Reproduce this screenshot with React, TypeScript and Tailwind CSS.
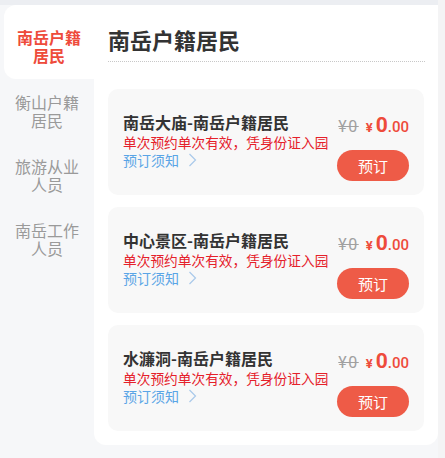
import React from "react";

const items = [
  { name: "南岳大庙-南岳户籍居民" },
  { name: "中心景区-南岳户籍居民" },
  { name: "水濂洞-南岳户籍居民" },
];

function Chevron() {
  return (
    <svg width="9" height="14" viewBox="0 0 9 14" className="ml-[9px]">
      <polyline points="1.5,1 7.5,7 1.5,13" fill="none" stroke="#a9c9ea" strokeWidth="1.2" />
    </svg>
  );
}

function Card({ name }: { name: string }) {
  return (
    <div className="h-[106px] w-[316px] rounded-[10px] bg-[#f8f8f8] flex justify-between">
      <div className="pl-[15px] pt-[22px] flex flex-col">
        <div className="text-[16px] leading-[22px] font-bold text-[#333333]">{name}</div>
        <div className="text-[13.7px] leading-[18px] text-[#e5202a] whitespace-nowrap">单次预约单次有效，凭身份证入园</div>
        <div className="flex items-center text-[14px] leading-[18px] text-[#5aa5e6]">
          预订须知
          <Chevron />
        </div>
      </div>
      <div className="pr-[15px] pt-[26px] flex flex-col items-end">
        <div className="flex items-baseline h-[24px] font-['Roboto','Noto_Sans_CJK_SC',sans-serif]">
          <span className="text-[16px] tracking-[1.5px] text-[#a0a0a0] line-through mr-[7px]">¥0</span>
          <span className="text-[13px] font-bold text-[#ee4b3b] mr-[3px]">¥</span>
          <span className="text-[21px] font-bold text-[#ee4b3b] leading-none">0</span>
          <span className="text-[15px] font-medium text-[#ee4b3b]">.00</span>
        </div>
        <button className="mt-[11px] w-[72px] h-[31px] rounded-full bg-[#ee5b47] text-white text-[15px] leading-[31px] text-center">
          预订
        </button>
      </div>
    </div>
  );
}

export default function App() {
  return (
    <div className="w-[445px] h-[458px] bg-[#f4f4f5] flex font-['Noto_Sans_CJK_SC','Noto_Sans',sans-serif]">
      <div className="w-[438px] h-[458px] bg-[#f6f7f9] flex flex-col">
        <div className="h-[5px] bg-[#eceef2]" />
        <div className="flex">
          <div className="w-[94px] flex flex-col">
            <div className="ml-[4px] h-[74px] bg-white rounded-l-[12px] pt-[23px] text-center text-[16px] leading-[18px] font-bold text-[#ee4b3b]">
              南岳户籍
              <br />
              居民
            </div>
            <div className="py-[14px] text-center text-[16px] leading-[18px] text-[#9a9a9a]">
              衡山户籍
              <br />
              居民
            </div>
            <div className="py-[14px] text-center text-[16px] leading-[18px] text-[#9a9a9a]">
              旅游从业
              <br />
              人员
            </div>
            <div className="py-[14px] text-center text-[16px] leading-[18px] text-[#9a9a9a]">
              南岳工作
              <br />
              人员
            </div>
          </div>
          <div className="w-[344px] h-[440px] bg-white rounded-b-[12px] px-[14px] pt-[19px]">
            <div className="w-[317px] pb-[7px] border-b border-dotted border-[#c8c8c8] text-[22px] leading-[30px] font-bold text-[#333333]">
              南岳户籍居民
            </div>
            <div className="mt-[27px] flex flex-col gap-[12px]">
              {items.map((it) => (
                <Card key={it.name} name={it.name} />
              ))}
            </div>
          </div>
        </div>
      </div>
    </div>
  );
}
